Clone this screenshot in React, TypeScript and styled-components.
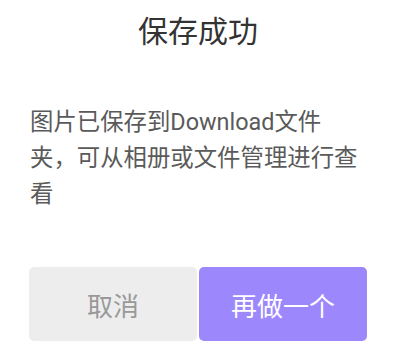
import React from 'react';
import styled, { createGlobalStyle } from 'styled-components';

const GlobalStyle = createGlobalStyle`
  html, body {
    margin: 0;
    padding: 0;
    background: #ffffff;
  }
  body {
    font-family: Roboto, "Noto Sans CJK SC", sans-serif;
  }
`;

const Dialog = styled.div`
  width: 400px;
  height: 359px;
  box-sizing: border-box;
  padding: 12px 33px 0 29px;
  display: flex;
  flex-direction: column;
  background: #ffffff;
`;

const Title = styled.h1`
  margin: 0;
  font-size: 30px;
  line-height: 40px;
  font-weight: 400;
  color: #333333;
  text-align: center;
`;

const Message = styled.p`
  margin: 52px 0 0;
  font-size: 23.4px;
  line-height: 36px;
  color: #5a5a5a;
  padding-left: 1px;
`;

const Actions = styled.div`
  display: grid;
  grid-template-columns: 1fr 1fr;
  gap: 2px;
  margin-top: 55px;
`;

const Button = styled.button<{ $primary?: boolean }>`
  height: 74px;
  border: none;
  border-radius: 5px;
  font-family: inherit;
  font-size: 26px;
  background: ${({ $primary }) => ($primary ? '#9c87fd' : '#ededed')};
  color: ${({ $primary }) => ($primary ? '#ffffff' : '#999999')};
  cursor: pointer;
`;

const App: React.FC = () => {
  return (
    <>
      <GlobalStyle />
      <Dialog>
        <Title>保存成功</Title>
        <Message>图片已保存到Download文件夹，可从相册或文件管理进行查看</Message>
        <Actions>
          <Button>取消</Button>
          <Button $primary>再做一个</Button>
        </Actions>
      </Dialog>
    </>
  );
};

export default App;
